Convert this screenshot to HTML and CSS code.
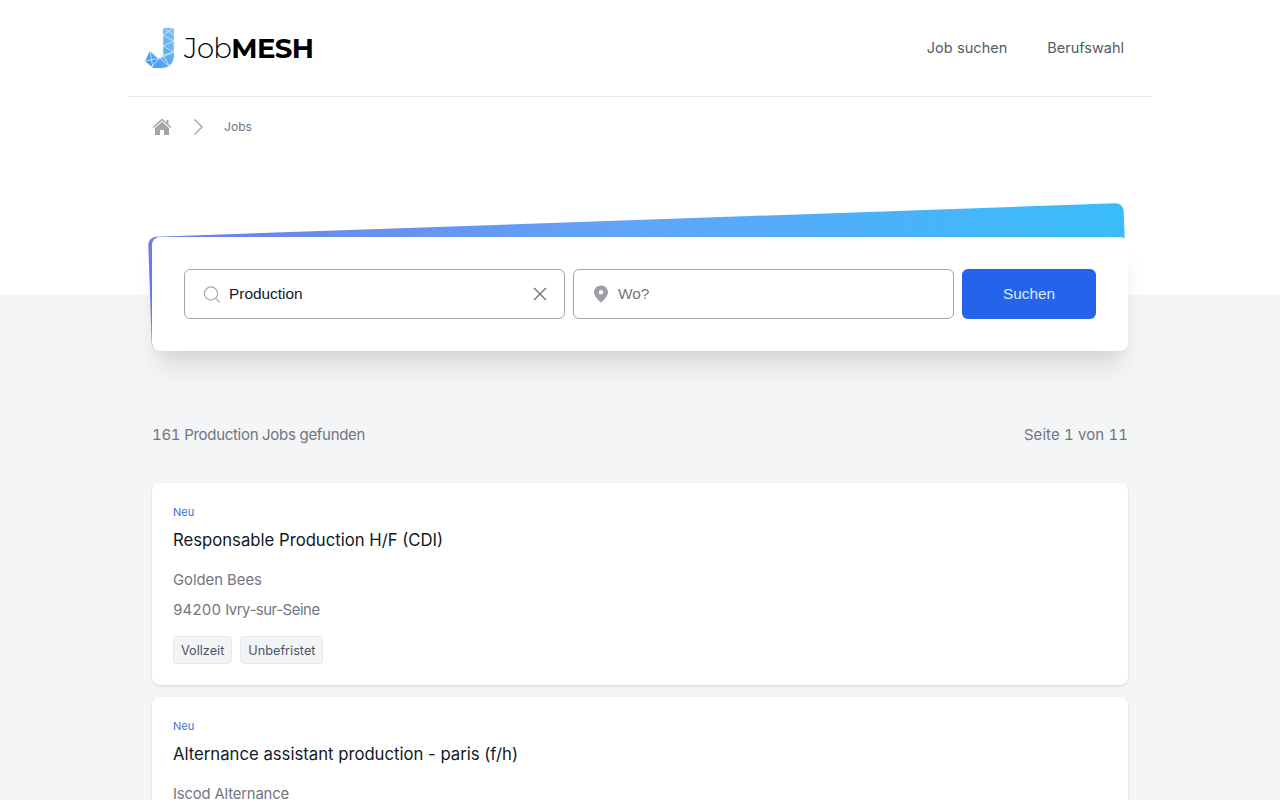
FILE: index.html
```html
<!DOCTYPE html>
<html lang="de">
<head>
<meta charset="utf-8">
<title>JobMESH</title>
<link rel="stylesheet" href="styles.css">
</head>
<body>
<div class="top">
  <div class="wrap">
    <header class="header">
      <a class="logo" href="#">
        <svg class="logo-mark" viewBox="0 0 30 40" width="30" height="40">
          <defs>
            <linearGradient id="lg" x1="0" y1="1" x2="1" y2="0">
              <stop offset="0" stop-color="#3f97ea"/>
              <stop offset="1" stop-color="#7cc0f5"/>
            </linearGradient>
          </defs>
          <path d="M18 0h11v27c0 8-5 13-12 13H8L0 33l5-10 5 5c1 1 3 2 5 2 2 0 3-2 3-4z" fill="url(#lg)"/>
          <path d="M18 0l11 7M29 0l-11 7 11 6-11 5 11 6-11 3M18 7v20M29 7v17M18 18l-3 12 14-6M15 30l10 9M18 27l7 12M15 30L5 40M5 23l10 7M0 33l15-3M5 23l3 17" fill="none" stroke="#d9effd" stroke-width=".8"/>
        </svg>
        <span class="logo-text"><span class="logo-light">Job</span><span class="logo-bold">MESH</span></span>
      </a>
      <nav class="nav">
        <a href="#">Job suchen</a>
        <a href="#">Berufswahl</a>
      </nav>
    </header>
    <div class="crumbs">
      <svg class="home" viewBox="0 0 20 20" width="20" height="20"><path d="M10 1.500L.5 10l.9 1L10 3.400 18.600 11l.9-1-3-2.700V3h-2v2.500z" fill="#a3a5a9"/><path d="M10 4.800l-7 6.200v7h5v-5h4v5h5v-7z" fill="#a3a5a9"/></svg>
      <svg class="chev" viewBox="0 0 12 18" width="12" height="18"><path d="M2.500 1.500L10 9l-7.500 7.500" fill="none" stroke="#a3a5a9" stroke-width="1.400"/></svg>
      <span class="crumb-text">Jobs</span>
    </div>
  </div>
</div>
<main class="wrap content">
  <section class="search">
    <div class="search-row">
      <div class="field">
        <svg class="ic" viewBox="0 0 18 18" width="18" height="18"><circle cx="8" cy="8.500" r="6.600" fill="none" stroke="#a3a8b0" stroke-width="1.200"/><path d="M12.800 13.300l4 4" stroke="#a3a8b0" stroke-width="1.200"/></svg>
        <span class="value">Production</span>
        <svg class="clear" viewBox="0 0 14 14" width="14" height="14"><path d="M1 1l12 12M13 1L1 13" stroke="#6b7280" stroke-width="1.400"/></svg>
      </div>
      <div class="field">
        <svg class="ic" viewBox="0 0 18 18" width="18" height="18"><path fill-rule="evenodd" d="M9 .5c4 0 7 3 7 6.800C16 11.200 12 14.800 9 17.800 6 14.800 2 11.200 2 7.300 2 3.500 5 .5 9 .5zm0 4.500a2.200 2.200 0 100 4.400A2.200 2.200 0 009 5z" fill="#9ca0a6"/></svg>
        <span class="placeholder">Wo?</span>
      </div>
      <button class="btn" type="button">Suchen</button>
    </div>
  </section>

  <div class="summary">
    <span class="found"><span class="num">161</span> Production Jobs gefunden</span>
    <span class="page">Seite <span class="num">1</span> von <span class="num">11</span></span>
  </div>

  <div class="list">
    <article class="job">
      <div class="badge">Neu</div>
      <h2 class="title">Responsable Production H/F (CDI)</h2>
      <p class="meta">Golden Bees</p>
      <p class="meta"><span class="num">94200</span> <span class="town">Ivry-sur-Seine</span></p>
      <div class="tags"><span class="tag">Vollzeit</span><span class="tag">Unbefristet</span></div>
    </article>
    <article class="job">
      <div class="badge">Neu</div>
      <h2 class="title">Alternance assistant production - paris (f/h)</h2>
      <p class="meta company-alt">Iscod Alternance</p>
      <p class="meta"><span class="num">75001</span> <span class="town">Paris</span></p>
      <div class="tags"><span class="tag">Vollzeit</span></div>
    </article>
  </div>
</main>
</body>
</html>
```
FILE: styles.css
```css
* { box-sizing: border-box; }
html, body { margin: 0; padding: 0; }
body {
  background: #f3f5f6;
  font-family: Inter, "Liberation Sans", sans-serif;
  color: #111827;
  overflow-x: hidden;
}
a { color: inherit; text-decoration: none; }
.num { font-variant-numeric: tabular-nums; }
.wrap { width: 1024px; margin: 0 auto; }
.top { position: relative; z-index: -2; background: #fff; height: 295px; }
.header {
  height: 97px;
  border-bottom: 1px solid #e8eaed;
  display: flex;
  align-items: center;
  justify-content: space-between;
  padding: 0 28px 0 17px;
}
.logo { display: flex; align-items: center; gap: 9px; }
.logo-mark { display: block; }
.logo-text { font-family: Montserrat, "Open Sans", Inter, sans-serif; font-size: 27.500px; color: #000; letter-spacing: -0.600px; line-height: 40px; }
.logo-light { font-weight: 300; }
.logo-bold { font-weight: 700; }
.nav { display: flex; gap: 40px; padding-bottom: 2px; font-size: 14.500px; word-spacing: .5px; color: #555b65; }
.crumbs {
  display: flex;
  align-items: center;
  padding: 20px 0 0 24px;
}
.chev { margin-left: 20px; }
.crumb-text { margin-left: 20px; padding-bottom: 1px; font-size: 12.100px; color: #717680; }
.content { padding: 0 24px; }
.search {
  position: relative;
  margin-top: -58px;
  height: 114px;
  padding: 32px;
  background: #fff;
  border-radius: 8px;
  box-shadow: 0 20px 25px -5px rgba(0,0,0,.1), 0 10px 10px -5px rgba(0,0,0,.04);
}
.search::before {
  content: "";
  position: absolute;
  inset: 0;
  z-index: -1;
  border-radius: 8px;
  background: linear-gradient(to right, #6d7fe6, #60a5fa 50%, #38bdf8);
  transform-origin: bottom left;
  transform: rotate(-2deg);
}
.search-row { display: flex; gap: 8px; }
.field {
  flex: 1;
  height: 50px;
  background: #fff;
  border: 1px solid #a3a5a9;
  border-radius: 6px;
  display: flex;
  align-items: center;
  padding: 0 17px 0 18px;
  font-family: "Liberation Sans", Arial, sans-serif;
  font-size: 15.400px;
}
.ic { flex: none; margin-right: 8px; }
.value { flex: 1; color: #111827; }
.placeholder { flex: 1; color: #717680; }
.clear { flex: none; }
.btn {
  flex: none;
  width: 134px;
  height: 50px;
  border: 0;
  border-radius: 6px;
  background: #2563eb;
  color: #dbeafe;
  font: 400 15.400px "Liberation Sans", Arial, sans-serif;
}
.summary {
  display: flex;
  justify-content: space-between;
  margin-top: 74px;
  font-size: 15px;
  line-height: 20px;
  color: #717680;
}
.found { letter-spacing: -.3px; }
.page { letter-spacing: .05px; }
.list { margin-top: 38px; display: flex; flex-direction: column; gap: 12px; }
.job {
  background: #fff;
  border-radius: 8px;
  height: 202px;
  padding: 21px 21px 0;
  box-shadow: 0 1px 3px rgba(0,0,0,.1), 0 1px 2px rgba(0,0,0,.06);
}
.badge { font-size: 11px; line-height: 16px; color: #3b6fd0; }
.title { margin: 8px 0 0; font-size: 16.700px; line-height: 24px; font-weight: 400; color: #111827; }
.meta { margin: 0; font-size: 14.800px; line-height: 30px; color: #717680; }
.title + .meta { margin-top: 13px; }
.company-alt { letter-spacing: -.15px; }
.town { letter-spacing: -.4px; }
.tags { display: flex; gap: 8px; margin-top: 11px; }
.tag {
  height: 28px;
  padding: 0 7px;
  display: flex;
  align-items: center;
  background: #f3f4f6;
  border: 1px solid #e5e7eb;
  border-radius: 4px;
  font-size: 12.700px;
  color: #4b5563;
}
```
